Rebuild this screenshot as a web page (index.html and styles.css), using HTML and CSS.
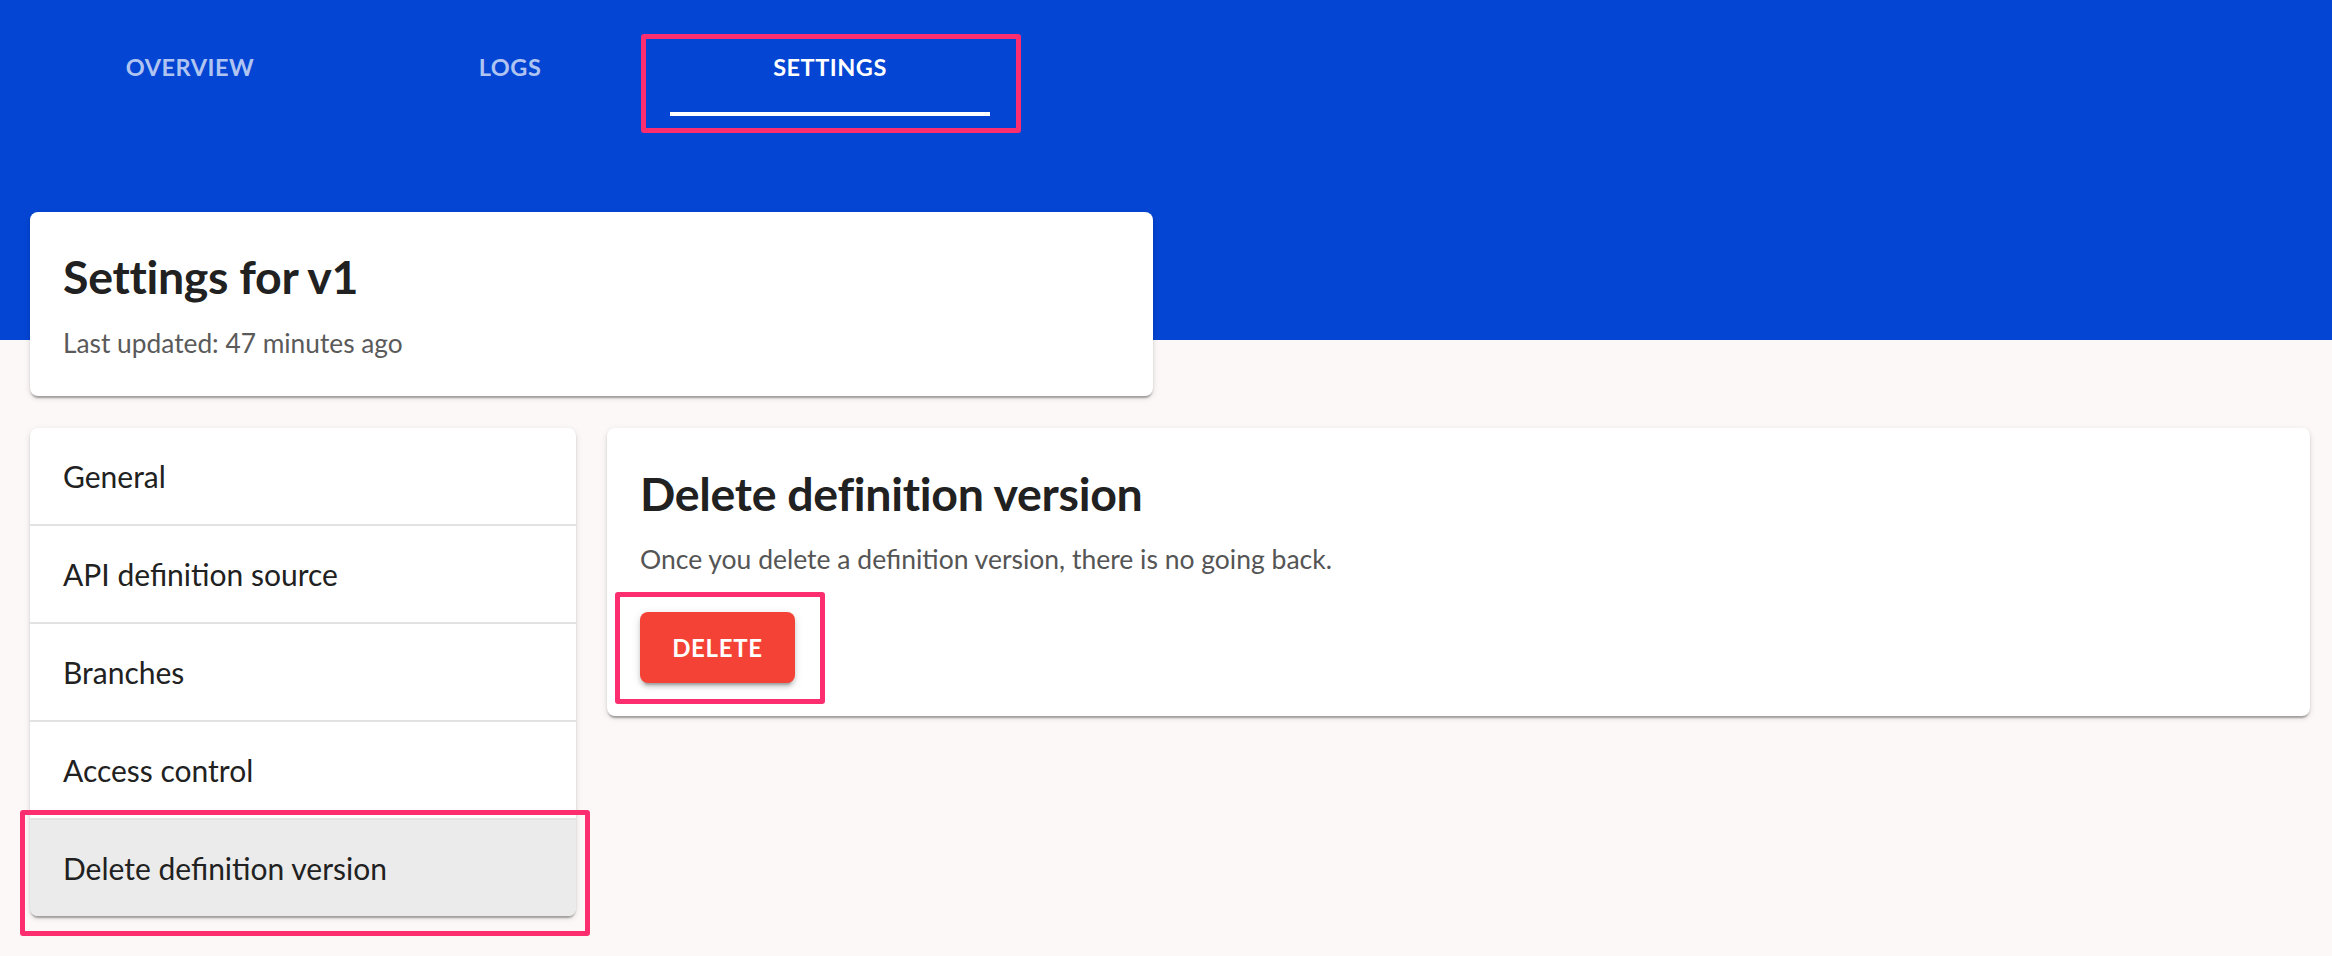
FILE: index.html
```html
<!DOCTYPE html>
<html lang="en">
<head>
<meta charset="utf-8">
<title>Settings for v1</title>
<link rel="stylesheet" href="styles.css">
</head>
<body>
<div class="page">
  <nav class="tabs">
    <div class="tab">Overview</div>
    <div class="tab">Logs</div>
    <div class="tab tab-active">Settings<span class="mark mark-tab"></span></div>
  </nav>

  <section class="card head-card">
    <h1 class="title">Settings for v1</h1>
    <p class="caption">Last updated: 47 minutes ago</p>
  </section>

  <div class="layout">
    <ul class="card menu">
      <li class="menu-item">General</li>
      <li class="menu-item">API definition source</li>
      <li class="menu-item">Branches</li>
      <li class="menu-item">Access control</li>
      <li class="menu-item menu-selected">Delete definition version<span class="mark mark-item"></span></li>
    </ul>

    <section class="card panel">
      <h2 class="title">Delete definition version</h2>
      <p class="desc">Once you delete a definition version, there is no going back.</p>
      <div class="btn-wrap">
        <button class="btn-danger">Delete</button>
        <span class="mark mark-btn"></span>
      </div>
    </section>
  </div>
</div>
</body>
</html>
```

FILE: styles.css
```css
* { box-sizing: border-box; }

html, body {
  margin: 0;
  padding: 0;
}

body {
  font-family: "Lato", "Noto Sans", sans-serif;
  background: linear-gradient(#0445d3 0, #0445d3 340px, #fcf8f7 340px);
  min-height: 956px;
  color: rgba(0, 0, 0, 0.87);
}

.page {
  padding: 22px 22px 0 30px;
}

/* Tabs */
.tabs {
  display: flex;
  height: 94px;
}

.tab {
  position: relative;
  width: 320px;
  display: flex;
  align-items: center;
  justify-content: center;
  text-transform: uppercase;
  font-size: 23.5px;
  font-weight: 700;
  letter-spacing: 0.5px;
  color: rgba(255, 255, 255, 0.7);
  border-bottom: 4px solid transparent;
}

.tab-active {
  color: #ffffff;
  border-bottom-color: #ffffff;
}

/* annotation marks */
.mark {
  position: absolute;
  border: 5px solid #fd2e6f;
  border-radius: 3px;
  pointer-events: none;
}

.mark-tab {
  top: 12px;
  left: -29px;
  right: -31px;
  bottom: -21px;
}

.mark-item {
  top: -10px;
  left: -10px;
  right: -14px;
  bottom: -20px;
}

.mark-btn {
  top: -20px;
  left: -25px;
  width: 210px;
  height: 112px;
}

/* Cards */
.card {
  background: #ffffff;
  border-radius: 8px;
  box-shadow: 0 4px 2px -2px rgba(0, 0, 0, 0.2),
              0 2px 2px 0 rgba(0, 0, 0, 0.14),
              0 2px 6px 0 rgba(0, 0, 0, 0.12);
}

.head-card {
  width: 1123px;
  height: 184px;
  margin-top: 96px;
  padding: 32px 33px 0 33px;
}

.title {
  margin: 0;
  font-size: 46.5px;
  line-height: 64px;
  font-weight: 700;
  color: #212121;
  letter-spacing: -0.3px;
}

.caption {
  margin: 15px 0 0 0;
  font-size: 26.3px;
  line-height: 40px;
  color: #5a5a5a;
}

/* Layout */
.layout {
  display: grid;
  grid-template-columns: 546px 1fr;
  column-gap: 31px;
  align-items: start;
  margin-top: 32px;
}

.menu {
  list-style: none;
  margin: 0;
  padding: 0;
}

.menu-item {
  position: relative;
  height: 98px;
  display: flex;
  align-items: center;
  padding: 0 33px;
  font-size: 30px;
  color: #212121;
  border-bottom: 2px solid #e2e2e2;
}

.menu-item:first-child {
  border-radius: 8px 8px 0 0;
}

.menu-selected {
  height: 96px;
  border-bottom: none;
  background: #ebebeb;
  border-radius: 0 0 8px 8px;
}

.panel {
  padding: 33px 35px 33px 33px;
}

.desc {
  margin: 14px 0 0 0;
  font-size: 26.5px;
  line-height: 40px;
  color: #555555;
}

.btn-wrap {
  position: relative;
  margin-top: 33px;
  width: 155px;
}

.btn-danger {
  display: block;
  width: 155px;
  height: 71px;
  border: none;
  border-radius: 8px;
  background: #f44336;
  color: #ffffff;
  font-family: "Lato", "Noto Sans", sans-serif;
  font-size: 24px;
  font-weight: 700;
  letter-spacing: 0.7px;
  text-transform: uppercase;
  box-shadow: 0 6px 2px -4px rgba(0, 0, 0, 0.2),
              0 4px 4px 0 rgba(0, 0, 0, 0.14),
              0 2px 10px 0 rgba(0, 0, 0, 0.12);
}
```
